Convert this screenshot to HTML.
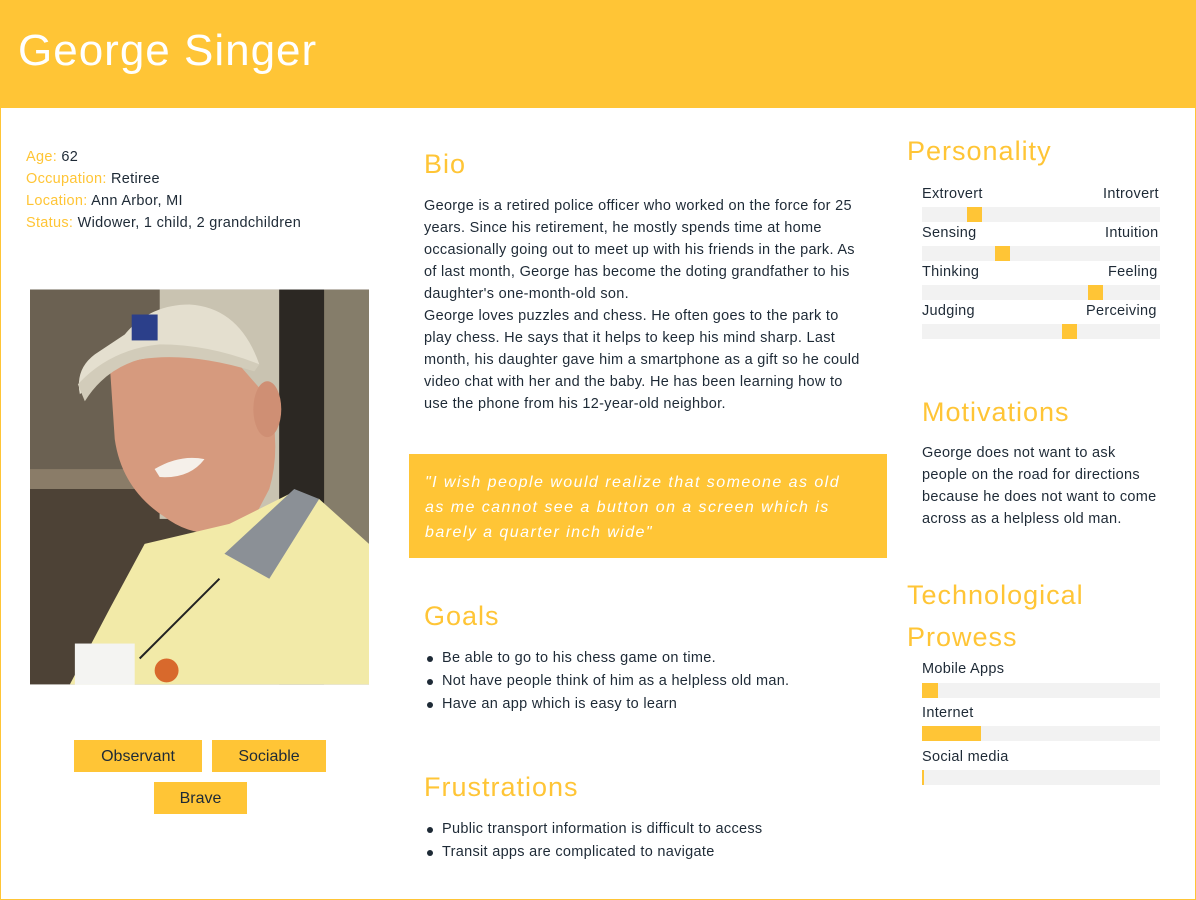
<!DOCTYPE html>
<html><head><meta charset="utf-8"><style>
*{margin:0;padding:0;box-sizing:border-box}
body{width:1196px;height:900px;position:relative;background:#fff;font-family:"Liberation Sans",sans-serif;color:#1e2a36;overflow:hidden}
.a{position:absolute;white-space:nowrap}
.hdr{left:0;top:0;width:1196px;height:108px;background:#ffc536}
.title{left:18px;top:26px;font-size:44px;color:#fff;letter-spacing:1px}
.frame{left:0;top:108px;width:1196px;height:792px;border:1px solid #ffc536;border-top:none}
.lbl{color:#ffc536}
.t{font-size:14.5px;line-height:22px;letter-spacing:0.3px}
.h{color:#ffc536;font-size:27px;letter-spacing:1px}
.bar{position:absolute;left:922px;width:238px;height:15px;background:#f2f2f2}
.bar i{position:absolute;top:0;height:15px;background:#ffc536}
.tag{position:absolute;height:32px;background:#ffc536;font-size:16px;text-align:center;line-height:33px}
ul{list-style:none}
li{position:relative;padding-left:18px;font-size:14.5px;line-height:23px;letter-spacing:0.3px}
li:before{content:"";position:absolute;left:3px;top:9px;width:6px;height:6px;border-radius:3px;background:#1e2a36}
</style></head><body>
<div class="a hdr"></div>
<div class="a title">George Singer</div>
<div class="a frame"></div>

<div class="a t" style="left:26px;top:146px"><span class="lbl">Age:</span> 62<br><span class="lbl">Occupation:</span> Retiree<br><span class="lbl">Location:</span> Ann Arbor, MI<br><span class="lbl">Status:</span> Widower, 1 child, 2 grandchildren</div>

<svg class="a" style="left:30px;top:289px" width="339" height="396" viewBox="0 0 340 396">
<rect width="340" height="396" fill="#4d4236"/>
<rect x="130" y="0" width="120" height="230" fill="#c9c3b1"/>
<rect x="250" y="0" width="45" height="396" fill="#2c2823"/>
<rect x="295" y="0" width="45" height="396" fill="#857d6a"/>
<rect x="0" y="0" width="130" height="180" fill="#6b6152"/>
<rect x="0" y="180" width="130" height="20" fill="#8a7c68"/>
<path d="M80 75 Q140 55 205 70 L240 110 Q252 160 240 200 L220 238 Q170 255 135 228 Q92 200 85 150 Z" fill="#d69a7e"/>
<ellipse cx="238" cy="120" rx="14" ry="28" fill="#cf8f74"/>
<path d="M95 45 Q120 15 160 15 Q210 18 230 75 Q160 55 90 75 Q60 95 50 105 Q45 80 65 65 Z" fill="#e4dfcf"/>
<path d="M48 95 Q80 60 130 55 Q180 55 230 75 L225 82 Q160 62 110 70 Q75 80 55 112 Z" fill="#d2ccba"/>
<rect x="102" y="25" width="26" height="26" fill="#2b3f8a"/>
<path d="M125 180 Q150 165 175 170 Q160 190 130 188 Z" fill="#f5f0ea"/>
<path d="M115 255 L200 235 L260 205 L290 210 L340 255 L340 396 L40 396 L80 320 Z" fill="#f2eaa8"/>
<path d="M195 265 L265 200 L290 210 L240 290 Z" fill="#8b9096"/>
<path d="M110 370 L190 290" stroke="#222" stroke-width="2"/>
<rect x="45" y="355" width="60" height="41" fill="#f4f4f2"/>
<circle cx="137" cy="382" r="12" fill="#d8692c"/>
</svg>

<div class="tag" style="left:74px;top:740px;width:128px">Observant</div>
<div class="tag" style="left:212px;top:740px;width:114px">Sociable</div>
<div class="tag" style="left:154px;top:782px;width:93px">Brave</div>

<div class="a h" style="left:424px;top:149px">Bio</div>
<div class="a t" style="left:424px;top:195px">George is a retired police officer who worked on the force for 25<br>years. Since his retirement, he mostly spends time at home<br>occasionally going out to meet up with his friends in the park. As<br>of last month, George has become the doting grandfather to his<br>daughter's one-month-old son.<br>George loves puzzles and chess. He often goes to the park to<br>play chess. He says that it helps to keep his mind sharp. Last<br>month, his daughter gave him a smartphone as a gift so he could<br>video chat with her and the baby. He has been learning how to<br>use the phone from his 12-year-old neighbor.</div>

<div class="a" style="left:409px;top:454px;width:478px;height:104px;background:#ffc536"></div>
<div class="a" style="left:425px;top:470px;color:#fff;font-style:italic;font-size:16px;line-height:25px;letter-spacing:1.45px">"I wish people would realize that someone as old<br>as me cannot see a button on a screen which is<br>barely a quarter inch wide"</div>

<div class="a h" style="left:424px;top:601px">Goals</div>
<ul class="a" style="left:424px;top:647px"><li>Be able to go to his chess game on time.</li><li>Not have people think of him as a helpless old man.</li><li>Have an app which is easy to learn</li></ul>

<div class="a h" style="left:424px;top:772px">Frustrations</div>
<ul class="a" style="left:424px;top:818px"><li>Public transport information is difficult to access</li><li>Transit apps are complicated to navigate</li></ul>

<div class="a h" style="left:907px;top:136px">Personality</div>
<div class="a t" style="left:922px;top:183px">Extrovert</div><div class="a t" style="left:1103px;top:183px">Introvert</div>
<div class="bar" style="top:207px"><i style="left:45px;width:15px"></i></div>
<div class="a t" style="left:922px;top:222px">Sensing</div><div class="a t" style="left:1105px;top:222px">Intuition</div>
<div class="bar" style="top:246px"><i style="left:73px;width:15px"></i></div>
<div class="a t" style="left:922px;top:261px">Thinking</div><div class="a t" style="left:1108px;top:261px">Feeling</div>
<div class="bar" style="top:285px"><i style="left:166px;width:15px"></i></div>
<div class="a t" style="left:922px;top:300px">Judging</div><div class="a t" style="left:1086px;top:300px">Perceiving</div>
<div class="bar" style="top:324px"><i style="left:140px;width:15px"></i></div>

<div class="a h" style="left:922px;top:397px">Motivations</div>
<div class="a t" style="left:922px;top:442px">George does not want to ask<br>people on the road for directions<br>because he does not want to come<br>across as a helpless old man.</div>

<div class="a h" style="left:907px;top:574px;line-height:42px">Technological<br>Prowess</div>
<div class="a t" style="left:922px;top:658px">Mobile Apps</div>
<div class="bar" style="top:683px"><i style="left:0;width:16px"></i></div>
<div class="a t" style="left:922px;top:702px">Internet</div>
<div class="bar" style="top:726px"><i style="left:0;width:59px"></i></div>
<div class="a t" style="left:922px;top:746px">Social media</div>
<div class="bar" style="top:770px"><i style="left:0;width:2px"></i></div>
</body></html>
